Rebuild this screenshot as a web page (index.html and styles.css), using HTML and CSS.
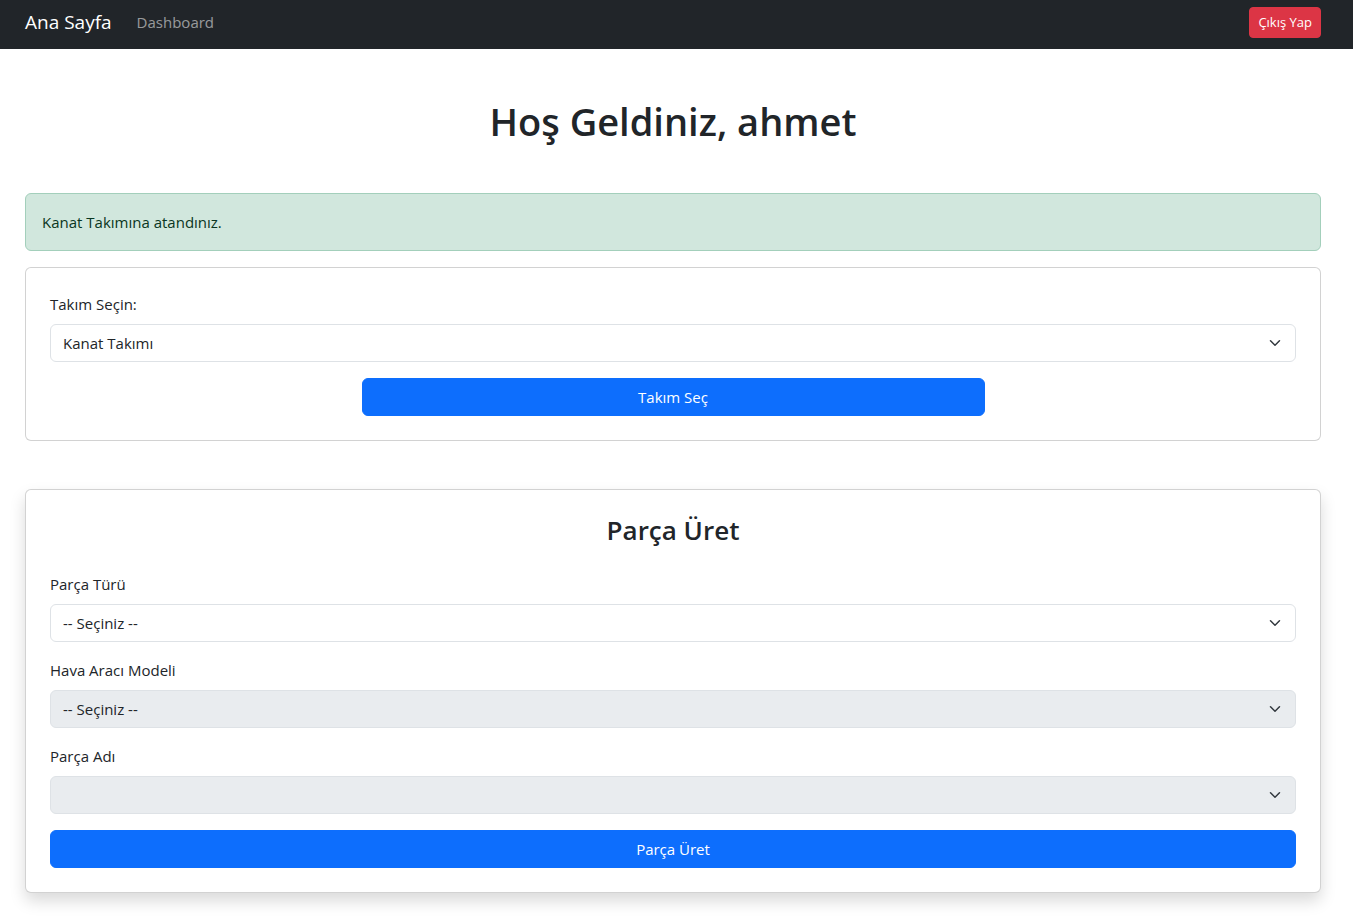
FILE: index.html
```html
<!DOCTYPE html>
<html lang="tr">
<head>
<meta charset="utf-8">
<title>Dashboard</title>
<link rel="stylesheet" href="styles.css">
</head>
<body>
<nav class="navbar">
  <div class="nav-inner">
    <div class="nav-left">
      <a class="brand" href="#">Ana Sayfa</a>
      <a class="nav-link" href="#">Dashboard</a>
    </div>
    <button class="btn btn-danger btn-sm" type="button">Çıkış Yap</button>
  </div>
</nav>

<main class="container">
  <h1 class="title">Hoş Geldiniz, ahmet</h1>

  <div class="alert">Kanat Takımına atandınız.</div>

  <section class="card">
    <form class="card-body">
      <label class="form-label" for="team">Takım Seçin:</label>
      <select class="form-select" id="team">
        <option>Kanat Takımı</option>
      </select>
      <button class="btn btn-primary btn-half" type="button">Takım Seç</button>
    </form>
  </section>

  <section class="card card-shadow">
    <form class="card-body">
      <h3 class="card-title">Parça Üret</h3>
      <div class="field">
        <label class="form-label" for="type">Parça Türü</label>
        <select class="form-select" id="type">
          <option>-- Seçiniz --</option>
        </select>
      </div>
      <div class="field">
        <label class="form-label" for="model">Hava Aracı Modeli</label>
        <select class="form-select" id="model" disabled>
          <option>-- Seçiniz --</option>
        </select>
      </div>
      <div class="field">
        <label class="form-label" for="name">Parça Adı</label>
        <select class="form-select" id="name" disabled>
          <option></option>
        </select>
      </div>
      <button class="btn btn-primary btn-full" type="button">Parça Üret</button>
    </form>
  </section>
</main>
</body>
</html>
```

FILE: styles.css
```css
* { box-sizing: border-box; }

body {
  margin: 0;
  font-family: "Open Sans", "Noto Sans", sans-serif;
  font-size: 15px;
  line-height: 24px;
  color: #212529;
  background: #fff;
}

.navbar {
  background: #212529;
  height: 49px;
}

.nav-inner {
  width: 1296px;
  margin-left: 25px;
  height: 100%;
  padding-top: 7px;
  display: flex;
  align-items: flex-start;
  justify-content: space-between;
}

.nav-left {
  display: flex;
  align-items: center;
  gap: 25px;
}

.brand {
  color: #fff;
  font-size: 19px;
  text-decoration: none;
  line-height: 30px;
}

.nav-link {
  color: rgba(255, 255, 255, 0.55);
  font-size: 15px;
  line-height: 28px;
  text-decoration: none;
}

.btn {
  display: block;
  border: 1px solid transparent;
  font-family: inherit;
  font-size: 15px;
  line-height: 24px;
  padding: 6px 12px;
  border-radius: 6px;
  color: #fff;
  cursor: pointer;
}

.btn-sm {
  font-size: 13px;
  line-height: 21px;
  padding: 4px 8px;
  border-radius: 4px;
}

.btn-danger {
  background: #dc3545;
  border-color: #dc3545;
}

.btn-primary {
  background: #0d6efd;
  border-color: #0d6efd;
}

.btn-half {
  width: 50%;
  margin: 16px auto 0;
}

.btn-full {
  width: 100%;
}

.container {
  width: 1296px;
  margin-left: 25px;
  padding-top: 48px;
  padding-bottom: 24px;
}

.title {
  margin: 0 0 48px;
  text-align: center;
  font-size: 38px;
  font-weight: 600;
  line-height: 48px;
}

.alert {
  background: #d1e7dd;
  border: 1px solid #a3cfbb;
  color: #0a3622;
  border-radius: 6px;
  padding: 16px;
  margin-bottom: 16px;
}

.card {
  border: 1px solid rgba(0, 0, 0, 0.175);
  border-radius: 6px;
  background: #fff;
}

.card + .card {
  margin-top: 48px;
}

.card-shadow {
  box-shadow: 0 8px 16px rgba(0, 0, 0, 0.15);
}

.card-body {
  padding: 24px;
  display: flex;
  flex-direction: column;
}

.card-title {
  margin: 0 0 24px;
  text-align: center;
  font-size: 26px;
  font-weight: 600;
  line-height: 33.6px;
}

.form-label {
  display: block;
  margin-bottom: 8px;
}

.field {
  margin-bottom: 16px;
}

.form-select {
  display: block;
  width: 100%;
  height: 38px;
  padding: 6px 36px 6px 12px;
  font-family: inherit;
  font-size: 15px;
  line-height: 24px;
  color: #212529;
  background-color: #fff;
  background-image: url("data:image/svg+xml,%3csvg xmlns='http://www.w3.org/2000/svg' viewBox='0 0 16 16'%3e%3cpath fill='none' stroke='%23343a40' stroke-linecap='round' stroke-linejoin='round' stroke-width='2' d='m2 5 6 6 6-6'/%3e%3c/svg%3e");
  background-repeat: no-repeat;
  background-position: right 12px center;
  background-size: 16px 12px;
  border: 1px solid #dee2e6;
  border-radius: 6px;
  appearance: none;
  -webkit-appearance: none;
}

.form-select:disabled {
  background-color: #e9ecef;
  opacity: 1;
}
```
